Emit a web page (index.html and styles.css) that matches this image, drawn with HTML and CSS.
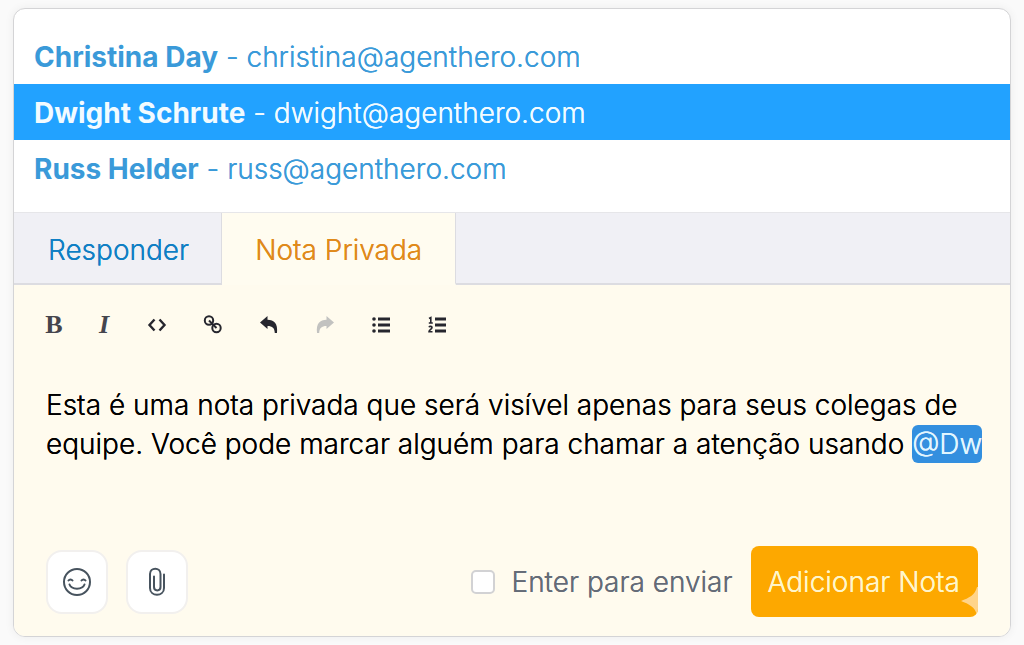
FILE: index.html
```html
<!DOCTYPE html>
<html lang="pt-BR">
<head>
    <meta charset="UTF-8">
    <meta name="viewport" content="width=device-width, initial-scale=1.0">
    <title>Nota Privada</title>
    <link rel="stylesheet" href="styles.css">
</head>
<body>
    <main class="card">
        <!-- Mention suggestions -->
        <ul class="people">
            <li><a href="#christina"><strong>Christina Day</strong> - christina@agenthero.com</a></li>
            <li><a href="#dwight" class="selected"><strong>Dwight Schrute</strong> - dwight@agenthero.com</a></li>
            <li><a href="#russ"><strong>Russ Helder</strong> - russ@agenthero.com</a></li>
        </ul>

        <div class="tabs">
            <button type="button" class="tab">Responder</button>
            <button type="button" class="tab active">Nota Privada</button>
            <div class="tab-fill"></div>
        </div>

        <form class="editor">
            <div class="toolbar">
                <button type="button" class="tool bold" aria-label="Negrito">B</button>
                <button type="button" class="tool italic" aria-label="Itálico">I</button>
                <button type="button" class="tool" aria-label="Código">
                    <svg width="20" height="20" viewBox="0 0 20 20" fill="none" stroke="currentColor" stroke-width="2.4"><path d="M7.500 4.500 2.500 10l5 5.500M12.500 4.500 17.500 10l-5 5.500"/></svg>
                </button>
                <button type="button" class="tool" aria-label="Link">
                    <svg width="20" height="20" viewBox="0 0 20 20" fill="none" stroke="currentColor" stroke-width="2"><circle cx="6" cy="5.500" r="4.200"/><circle cx="13.500" cy="13" r="4.200"/><path d="M6 5.500 13.500 13"/></svg>
                </button>
                <button type="button" class="tool" aria-label="Desfazer">
                    <svg width="20" height="20" viewBox="0 0 20 20" fill="currentColor"><path d="M1 7.500 8.500 1v3.800c6.500.2 10.500 3.500 9.500 13.200h-2.200c-.3-5-2.300-7-7.300-7v3z"/></svg>
                </button>
                <button type="button" class="tool off" aria-label="Refazer">
                    <svg width="20" height="20" viewBox="0 0 20 20" fill="currentColor"><path d="M19 7.500 11.500 1v3.800C5 5 1 8.300 2 18h2.200c.3-5 2.300-7 7.300-7v3z"/></svg>
                </button>
                <button type="button" class="tool" aria-label="Lista">
                    <svg width="20" height="20" viewBox="0 0 20 20" fill="currentColor"><path d="M7 2.500h12v3H7zM7 8.500h12v3H7zM7 14.500h12v3H7z"/><circle cx="3" cy="4" r="1.800"/><circle cx="3" cy="10" r="1.800"/><circle cx="3" cy="16" r="1.800"/></svg>
                </button>
                <button type="button" class="tool" aria-label="Lista numerada">
                    <svg width="20" height="20" viewBox="0 0 20 20" fill="currentColor"><path d="M8 2.500h11v3H8zM8 8.500h11v3H8zM8 14.500h11v3H8z"/><path d="M2 3.500 3.800 2.500V8M1.800 8h4M2 12.200c.5-1.200 3-1.200 3 .3 0 1.500-3 2.300-3 4.200h3.500" fill="none" stroke="currentColor" stroke-width="1.600"/></svg>
                </button>
            </div>

            <div class="message" contenteditable="true" role="textbox" aria-label="Nota" spellcheck="false">Esta é uma nota privada que será visível apenas para seus colegas de equipe. Você pode marcar alguém para chamar a atenção usando <span class="mention">@Dw</span></div>

            <div class="footer">
                <button type="button" class="round" aria-label="Emoji">
                    <svg width="30" height="30" viewBox="0 0 30 30" fill="none" stroke="currentColor" stroke-width="2" stroke-linecap="round"><circle cx="15" cy="15" r="13"/><path d="M7.500 17.500c2 5.500 13 5.500 15 0M6.500 13.500c1-1.500 3-1.500 4 0M19.500 13.500c1-1.500 3-1.500 4 0"/></svg>
                </button>
                <button type="button" class="round" aria-label="Anexar">
                    <svg width="30" height="30" viewBox="0 0 30 30" fill="none" stroke="currentColor" stroke-width="2" stroke-linecap="round"><path d="M22 7.500V21c0 9-14 9-14 0V7c0-7 10.500-7 10.500 0v13c0 4.500-6.500 4.500-6.500 0V9.500"/></svg>
                </button>
                <label class="send-on-enter"><input type="checkbox"> Enter para enviar</label>
                <button type="submit" class="submit">
                    Adicionar Nota
                    <svg class="sparkle" width="17" height="28" viewBox="0 0 17 28" fill="currentColor"><path d="M0 14C8 11 14 8 16 0h1v28h-1C14 20 8 17 0 14z"/></svg>
                </button>
            </div>
        </form>
    </main>
</body>
</html>
```

FILE: styles.css
```css
* {
    box-sizing: border-box;
}

/* The zero-blur shadow gives the light weight a bit more body */
body {
    margin: 0;
    padding: 8px 13px;
    background: #fafafa;
    font-family: Inter, "Liberation Sans", sans-serif;
    font-size: 28px;
    font-weight: 300;
    text-shadow: 0 0 0 currentColor;
    color: #000;
}

button {
    font: inherit;
    text-shadow: inherit;
    border: 0;
    padding: 0;
    background: none;
    cursor: pointer;
}

.card {
    border: 1px solid #d4d4d6;
    border-radius: 12px;
    background: #fff;
    overflow: hidden;
    box-shadow: 0 0 10px rgba(0, 0, 0, 0.06);
}

.people {
    list-style: none;
    margin: 0;
    padding: 19px 0 16px;
}

.people a {
    display: block;
    padding: 2px 20px 0;
    line-height: 54px;
    color: #3a9ad9;
    text-decoration: none;
}

.people a.selected {
    background: #22a2ff;
    color: #f2fbff;
}

.people strong {
    font-weight: 700;
    text-shadow: none;
}

.tabs {
    display: flex;
    border-top: 1px solid #e6e6e9;
}

.tab,
.tab-fill {
    background: #f0f0f5;
    border-bottom: 2px solid #dcdce1;
}

.tab {
    height: 72px;
    padding: 4px 32px 0 34px;
    border-right: 1px solid #dcdce1;
    color: #0f7fc4;
}

.tab.active {
    padding: 4px 33px 0;
    background: #fffcf0;
    border-bottom-color: #fffcf0;
    color: #e08a1a;
}

.tab-fill {
    flex: 1;
}

.editor {
    padding: 24px 32px 19px;
    background: #fffbee;
}

.toolbar {
    display: flex;
    gap: 24px;
    margin-left: -5px;
}

.tool {
    display: flex;
    align-items: center;
    justify-content: center;
    width: 32px;
    height: 32px;
    color: #26262e;
}

.tool.bold,
.tool.italic {
    width: 26px;
    font: bold 26px "Liberation Serif", serif;
    text-shadow: none;
    color: #45454d;
}

.tool.italic {
    font-style: italic;
}

.tool.off {
    color: #c2c2c0;
}

.message {
    min-height: 160px;
    margin: 45px -20px 0 0;
    line-height: 39px;
    outline: none;
}

.mention {
    padding: 2px 0;
    border-radius: 6px;
    background: #338fdf;
    color: #e2f6ff;
}

.footer {
    display: flex;
    align-items: center;
    gap: 18px;
}

.round {
    display: flex;
    align-items: center;
    justify-content: center;
    width: 62px;
    height: 64px;
    border: 2px solid #f2f0ee;
    border-radius: 16px;
    background: #fff;
    color: #47535e;
}

.send-on-enter {
    display: flex;
    align-items: center;
    gap: 16px;
    margin-left: auto;
    color: #646b77;
}

.send-on-enter input {
    appearance: none;
    width: 24px;
    height: 24px;
    margin: 0;
    border: 2px solid #d2d2d4;
    border-radius: 5px;
    background: #fff;
}

.submit {
    position: relative;
    height: 71px;
    padding: 0 18px 0 17px;
    border-radius: 8px;
    background: #fda800;
    color: #fff6cc;
    overflow: hidden;
}

/* Sparkle on the button's edge */
.sparkle {
    position: absolute;
    right: 0;
    bottom: 2px;
    color: #ffd48a;
}
```
